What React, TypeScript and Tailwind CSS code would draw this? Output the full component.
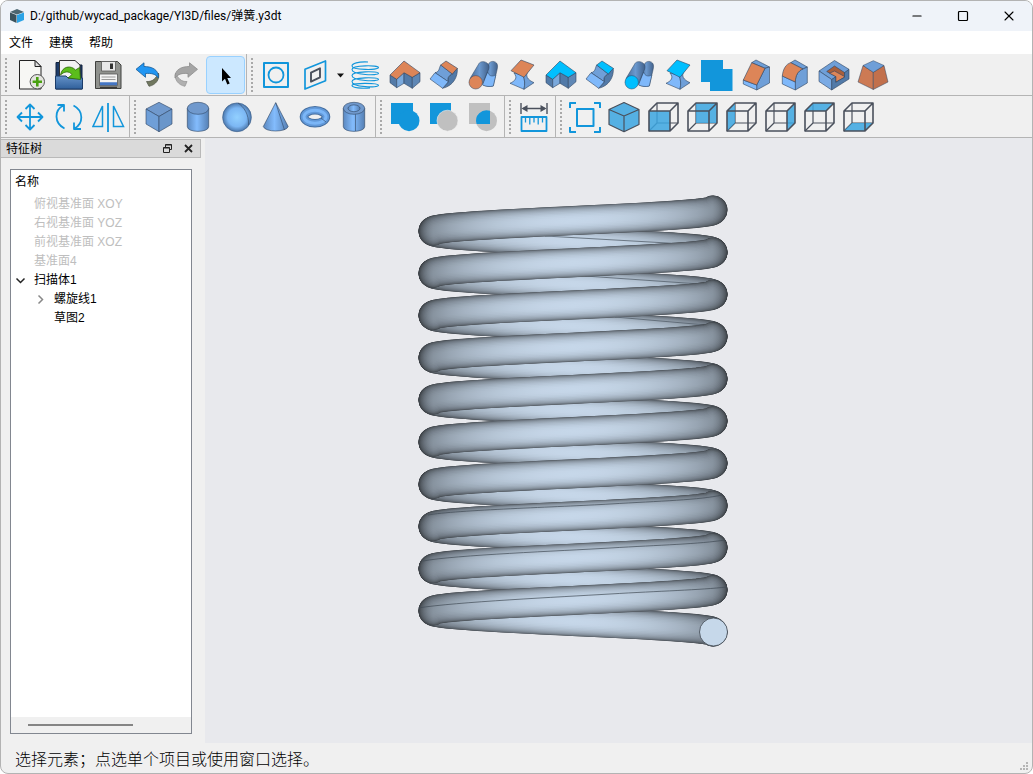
import type { ReactNode } from "react";
import { Minus, Square, X } from "lucide-react";

const BLUE = "#1296db";
const DARK = "#4a505c";
const EDGE = "#2f4461";
const FACE = "#6f9fd8";
const LIGHT = "#7fb8fa";
const SHADE = "#527aa8";
const ORANGE = "#dd8558";
const CYAN = "#00bfff";

function Icon({ children }: { children: ReactNode }) {
  return (
    <svg
      viewBox="0 0 33 32"
      className="h-8 w-[33px]"
      fill="none"
      strokeLinejoin="round"
      aria-hidden="true"
    >
      {children}
    </svg>
  );
}

function Tool({
  label,
  active,
  children,
}: {
  label: string;
  active?: boolean;
  children: ReactNode;
}) {
  return (
    <button
      type="button"
      aria-label={label}
      className={
        active
          ? "flex h-[38px] w-[39px] items-center justify-center rounded-sm border border-[#99d1ff] bg-[#cce8ff]"
          : "flex h-[38px] w-[39px] items-center justify-center rounded-sm hover:bg-[#e0eefa]"
      }
    >
      <Icon>{children}</Icon>
    </button>
  );
}

function ToolGroup({
  label,
  last,
  children,
}: {
  label: string;
  last?: boolean;
  children: ReactNode;
}) {
  return (
    <div
      role="toolbar"
      aria-label={label}
      className={
        last
          ? "flex shrink-0 pt-0.5 pl-1"
          : "flex shrink-0 border-r border-[#b4b4b4] pt-0.5 pr-px pl-1"
      }
    >
      <span className="mt-0.5 mr-[3px] h-[34px] w-[3px] bg-[radial-gradient(circle_at_1px_1px,#a9a9a9_1px,transparent_1px)] bg-[length:3px_4px]" />
      {children}
    </div>
  );
}

/* ---------- modelling icons ---------- */

function SweepIcon({ top }: { top: string }) {
  return (
    <g stroke={EDGE} strokeWidth="0.6">
      <path d="M2 16 8.7 20.3V28.7L2 23.7Z" fill={SHADE} />
      <path d="M8.7 20.3 16 13.7V24.3L8.7 28.7Z" fill="#7aa9dc" />
      <path d="M16 13.7 24.3 18.3V29.3L16 24.3Z" fill={SHADE} />
      <path d="M24.3 18.3 32 13.7V22.7L24.3 29.3Z" fill="#5f87b5" />
      <path d="M2 16 16 2 32 13.7 24.3 18.3 16 13.7 8.7 20.3Z" fill={top} />
    </g>
  );
}

function RevolveIcon({ top }: { top: string }) {
  return (
    <g stroke={EDGE} strokeWidth="0.6">
      <path d="M30.3 9.3C31 18 26 27 15.7 29.3L21.3 22.7C20 20 22 16 25.3 15Z" fill={SHADE} />
      <path d="M13.7 6C12 9 12.5 13 8 13.7L21.3 22.7C20 19 22 16 25.3 15Z" fill={FACE} />
      <path d="M8 13.7 3 20 15.7 29.3 21.3 22.7Z" fill={LIGHT} />
      <path d="M13.7 6 19 2 30.3 9.3 25.3 15Z" fill={top} />
    </g>
  );
}

function SweptPipeIcon({ top }: { top: string }) {
  return (
    <g stroke={EDGE} strokeWidth="0.5">
      <path d="M20 12 22.5 5C24 2 28 1.5 30.5 4 32 6 31.7 8 31 11L27.3 27C24 28 20 27.5 17 26Z" fill="url(#steel)" />
      <path d="M21.5 13C23 17 26 18 29.8 16L27.3 27C24 28 20 27.5 16.5 26Z" fill={LIGHT} />
      <path d="M4 19.5 13 4.5C14.5 2 19 2 21.5 4.5 23.3 6.5 23.3 8.5 22.3 11L16.2 25Z" fill="url(#steel)" />
      <circle cx="9.7" cy="23.3" r="6.7" fill={top} />
    </g>
  );
}

function LoftIcon({ top }: { top: string }) {
  return (
    <g stroke={EDGE} strokeWidth="0.6">
      <path d="M9 14C13 19 10 22 5 24.3L19 30.3C20 25 20 21 18 16Z" fill={LIGHT} />
      <path d="M18 16 24 11C19 17 23 21 29 23.7L19 30.3C20 25 20 21 18 16Z" fill={FACE} />
      <path d="M16 1 29 6 19 18.3 6 11.7Z" fill={top} />
    </g>
  );
}

type Side = "front" | "back" | "left" | "right" | "top" | "bottom";

const SIDES: Record<Side, string> = {
  front: "M2 10H23V30H2Z",
  back: "M10 2H31V22H10Z",
  left: "M2 10 10 2V22L2 30Z",
  right: "M23 10 31 2V22L23 30Z",
  top: "M2 10 10 2H31L23 10Z",
  bottom: "M2 30 10 22H31L23 30Z",
};

function ViewCube({ side }: { side: Side }) {
  return (
    <>
      <path d="M10 2V22H31M10 22 2 30" stroke={DARK} strokeWidth="1.2" />
      <path d={SIDES[side]} fill="#3ba6e0" fillOpacity="0.85" />
      <path
        d="M2 10 10 2H31V22L23 30H2ZM2 10H23V30M23 10 31 2"
        stroke={DARK}
        strokeWidth="1.6"
      />
    </>
  );
}

/* ---------- coil spring ---------- */

const PITCH = 42.2;
const TURNS = 10;
const CX = 573;
const RADIUS = 140;
const BASE_Y = 632;
const TUBE = 29;
const LAYERS = 14;

function halfTurn(front: boolean) {
  const points: string[] = [];
  for (let i = 0; i <= 40; i++) {
    const a = (i / 40) * Math.PI;
    const x = front ? CX - RADIUS * Math.cos(a) : CX + RADIUS * Math.cos(a);
    const y = BASE_Y - (front ? PITCH / 2 : 0) - (PITCH * a) / (2 * Math.PI);
    points.push(`${x.toFixed(1)} ${y.toFixed(1)}`);
  }
  return `M${points.join("L")}`;
}

const layers = Array.from({ length: LAYERS }, (_, i) => {
  const t = i / (LAYERS - 1);
  return {
    id: `tube-${i}`,
    width: TUBE * Math.cos((t * Math.PI) / 2.15),
    light: 0.3 + 0.7 * Math.sin((t * Math.PI) / 2),
  };
});

const stops = Array.from({ length: 21 }, (_, i) => {
  const u = (i / 20) * 2 - 1;
  return { offset: i / 20, shade: 0.46 + 0.54 * Math.pow(1 - u * u, 0.65) };
});

function tone(v: number) {
  const k = 0.12 + 0.88 * v;
  return `rgb(${Math.round(198 * k)} ${Math.round(215 * k)} ${Math.round(233 * k)})`;
}

const turns = Array.from({ length: TURNS }, (_, i) => -i * PITCH);

function Spring() {
  return (
    <svg viewBox="205 138 827 605" className="h-full w-full" role="img" aria-label="弹簧">
      <defs>
        {layers.map((l) => (
          <linearGradient
            key={l.id}
            id={l.id}
            gradientUnits="userSpaceOnUse"
            x1="418"
            x2="728"
            y1="0"
            y2="0"
          >
            {stops.map((s) => (
              <stop key={s.offset} offset={s.offset} stopColor={tone(l.light * s.shade)} />
            ))}
          </linearGradient>
        ))}
        {[true, false].map((front) => (
          <g
            key={String(front)}
            id={front ? "coil-front" : "coil-back"}
            fill="none"
            strokeLinecap="round"
            strokeLinejoin="round"
          >
            {layers.map((l) => (
              <path
                key={l.id}
                d={halfTurn(front)}
                stroke={`url(#${l.id})`}
                strokeWidth={l.width}
              />
            ))}
          </g>
        ))}
      </defs>
      {turns.map((dy) => (
        <use key={dy} href="#coil-back" y={dy} />
      ))}
      <g stroke="#56616c" strokeWidth="0.8">
        <path d="M545 236 685 244M585 276 700 284M615 317 706 325" />
      </g>
      {turns.map((dy) => (
        <use key={dy} href="#coil-front" y={dy} />
      ))}
      <g stroke="#414b55" strokeWidth="0.7" fill="none">
        <path d="M418 608C455 602 560 597 610 594S700 590 727 587" />
        <path d="M423 561C455 555 560 551 610 548S700 544 725 540" />
        <path d="M428 515C455 510 560 507 610 504S700 500 722 495" />
      </g>
      <circle cx="713.5" cy="632" r="14" fill="#c6d8ea" stroke="#3c444c" strokeWidth="0.8" />
    </svg>
  );
}

/* ---------- feature tree ---------- */

const planes = ["俯视基准面 XOY", "右视基准面 YOZ", "前视基准面 XOZ", "基准面4"];

function FeatureTree() {
  return (
    <div className="flex flex-1 flex-col border border-[#828790] bg-white font-['Liberation_Sans','Noto_Sans_CJK_SC',sans-serif]">
      <div className="pt-[3px] pl-1 leading-[19px]">名称</div>
      <ul role="tree" aria-label="特征树" className="flex-1 pt-[3px] leading-[19px]">
        {planes.map((name) => (
          <li key={name} role="treeitem" className="pl-[23px] text-[#bebebe]">
            {name}
          </li>
        ))}
        <li role="treeitem" aria-expanded="true">
          <div className="flex">
            <button type="button" aria-label="折叠" className="flex w-[23px] items-center pl-1">
              <svg viewBox="0 0 11 11" className="size-[11px]" fill="none" aria-hidden="true">
                <path d="M1.5 3.5 5.5 7.5 9.5 3.5" stroke="#222" strokeWidth="1.5" />
              </svg>
            </button>
            扫描体1
          </div>
          <ul role="group">
            <li role="treeitem" aria-expanded="false" className="flex pl-5">
              <button type="button" aria-label="展开" className="flex w-[23px] items-center pl-1">
                <svg viewBox="0 0 11 11" className="size-[11px]" fill="none" aria-hidden="true">
                  <path d="M3.5 1.5 7.5 5.5 3.5 9.5" stroke="#888" strokeWidth="1.5" />
                </svg>
              </button>
              螺旋线1
            </li>
            <li role="treeitem" className="pl-[43px]">
              草图2
            </li>
          </ul>
        </li>
      </ul>
      <div className="h-4 bg-[#f0f0f0] pt-[7px] pl-[17px]">
        <div className="h-0.5 w-[105px] bg-[#858585]" />
      </div>
    </div>
  );
}

export default function App() {
  return (
    <div className="flex h-screen min-h-[600px] flex-col overflow-hidden rounded-lg border border-[#b3b3b3] bg-[#f0f0f0] font-['Open_Sans','Noto_Sans_CJK_SC',sans-serif] text-xs text-black">
      <svg className="absolute size-0" aria-hidden="true">
        <defs>
          <linearGradient id="steel">
            <stop offset="0" stopColor="#4a6c98" />
            <stop offset="0.5" stopColor="#6b99cf" />
            <stop offset="1" stopColor="#42618a" />
          </linearGradient>
          <linearGradient id="round">
            <stop offset="0" stopColor="#5b88bf" />
            <stop offset="0.45" stopColor="#83bcfd" />
            <stop offset="1" stopColor="#557fb3" />
          </linearGradient>
          <radialGradient id="ball">
            <stop offset="0" stopColor="#92d0ff" />
            <stop offset="0.65" stopColor="#7cb7f4" />
            <stop offset="1" stopColor="#4b76aa" />
          </radialGradient>
          <linearGradient id="folder" x2="0" y2="1">
            <stop offset="0" stopColor="#6592c8" />
            <stop offset="1" stopColor="#30609b" />
          </linearGradient>
        </defs>
      </svg>

      <header className="flex h-[30px] shrink-0 items-center bg-[#eff3f9]">
        <svg viewBox="0 0 16 16" className="mr-[5px] ml-2 size-4" aria-hidden="true">
          <path d="M1 4 8 1 15 4 8 6.5Z" fill="#4c6670" />
          <path d="M1 4.5 7.5 7V15L1 12Z" fill="#3b525c" />
          <path d="M8 7 15 4.5V12L8 15Z" fill="#2ba3e6" />
        </svg>
        <h1 className="font-[Roboto,'Noto_Sans_CJK_SC',sans-serif]">
          D:/github/wycad_package/YI3D/files/弹簧.y3dt
        </h1>
        <div className="ml-auto flex h-full">
          <button type="button" aria-label="最小化" className="flex w-[46px] items-center justify-center">
            <Minus className="size-3.5" strokeWidth={2} />
          </button>
          <button type="button" aria-label="最大化" className="flex w-[46px] items-center justify-center">
            <Square className="size-3" strokeWidth={2.4} />
          </button>
          <button type="button" aria-label="关闭" className="flex w-[46px] items-center justify-center">
            <X className="size-4" strokeWidth={1.6} />
          </button>
        </div>
      </header>

      <nav aria-label="菜单" className="flex h-[23px] shrink-0 items-center bg-white">
        {["文件", "建模", "帮助"].map((name) => (
          <button key={name} type="button" className="w-10">
            {name}
          </button>
        ))}
      </nav>

      <div className="flex h-[42px] shrink-0 border-b border-[#b4b4b4]">
        <ToolGroup label="文件">
          <Tool label="新建">
            <path d="M5.5 1.5H21L27 7.5V30H5.5Z" fill="#f7f7f4" stroke="#222" />
            <path d="M21 1.5V7.5H27Z" fill="#ddd" stroke="#222" />
            <circle cx="23.3" cy="22.7" r="7.2" fill="#e4e4df" stroke="#555" />
            <path d="M23.3 18V27.4M18.6 22.7H28" stroke="#49a010" strokeWidth="2.6" />
          </Tool>
          <Tool label="打开">
            <path d="M3 30V3.5H9L11 6H29V30Z" fill="#1d3b68" stroke="#12233e" />
            <path d="M6.5 1.5H22L27 6V20H6.5Z" fill="#f2f2f2" stroke="#333" />
            <path d="M2.5 17H13L15 19H29.5V30H2.5Z" fill="url(#folder)" stroke="#1c3c69" />
            <path
              d="M7.5 16C9 7 18 6 22.5 11L26.5 8.5 27.5 20.5 15 19 19 15.5C16 11.5 11 12.5 7.5 16Z"
              fill="#5bbd1b"
              stroke="#2c6408"
              strokeWidth="0.8"
            />
          </Tool>
          <Tool label="保存">
            <path d="M3.5 2.5H25.5L29 6V29.5H3.5Z" fill="#8f918d" stroke="#3f403e" />
            <rect x="9.5" y="2.5" width="14" height="9.5" fill="#e9e9e9" stroke="#555" strokeWidth="0.8" />
            <rect x="18" y="4.5" width="3" height="5.5" fill="#333" />
            <rect x="7.5" y="15" width="18" height="11.5" fill="#f4f4f4" stroke="#555" strokeWidth="0.8" />
            <path d="M9.5 18H23.5M9.5 20.5H23.5" stroke="#999" />
            <path d="M8 24.8H25" stroke="#4476c4" strokeWidth="3" />
            <path d="M8 28.3H25" stroke="#222" />
          </Tool>
          <Tool label="撤销">
            <path d="M27.5 14C29 20 25 26 18 27.3L15.5 22.5C22 23 25 19 27.5 14Z" fill="#71785f" stroke="#4d5345" strokeWidth="0.7" />
            <path d="M5 10.3 13 3.8V7.5C20 7.5 28 10 27.5 19 25 15 20 14 14.5 14.5V18.3Z" fill="#2196f3" stroke="#175b96" strokeWidth="0.8" />
          </Tool>
          <Tool label="重做">
            <path d="M5.5 14C4 20 8 26 15 27.3L17 22.5C11 23 8 19 5.5 14Z" fill="#b0b0b0" stroke="#929292" strokeWidth="0.7" />
            <path d="M27.5 10.3 19.5 3.8V7.5C12 7.5 4.5 10 5 19 8 15 12 14 18 14.5V18.3Z" fill="#a5a5a5" stroke="#8d8d8d" strokeWidth="0.8" />
          </Tool>
          <Tool label="选择" active>
            <path d="M13 9V22.5L16 19.7 18.3 25.5 20.7 24.5 18.3 19H22Z" fill="#000" />
          </Tool>
        </ToolGroup>

        <ToolGroup label="建模" last>
          <Tool label="草图">
            <rect x="4" y="4" width="24" height="24" stroke={BLUE} strokeWidth="2" />
            <circle cx="16" cy="16" r="7.5" stroke={BLUE} strokeWidth="1.8" />
          </Tool>
          <Tool label="基准面">
            <path d="M6 10.3 26.5 2V21.7L6 30Z" stroke={BLUE} strokeWidth="1.7" />
            <path d="M12 13.7 21 9.3V18.3L12 22.7Z" stroke={DARK} strokeWidth="1.9" />
          </Tool>
          <button type="button" aria-label="更多基准面" className="flex w-[11px] items-center justify-center">
            <svg viewBox="0 0 9 5" className="h-[5px] w-[9px]" aria-hidden="true">
              <path d="M1 0.5H8L4.5 4.5Z" fill="#111" />
            </svg>
          </button>
          <Tool label="螺旋线">
            <path
              d="M19 3C9 2.5 3 4.5 3 7 3 11 29.5 11.5 29.5 8.5 29.5 6 3 6 3 10.5 3 16 29.5 17 29.5 14.3 29.5 12 3 12 3 16.5 3 22 29.5 23 29.5 20.3 29.5 18 3 18 3 22.5 3 28.5 29.5 29 29.5 26.3 29.5 24 3 23.5 3 26.5 3 29 13 29.5 21 29"
              stroke={BLUE}
              strokeWidth="1.1"
            />
          </Tool>
          <Tool label="拉伸"><SweepIcon top={ORANGE} /></Tool>
          <Tool label="旋转"><RevolveIcon top={ORANGE} /></Tool>
          <Tool label="扫描"><SweptPipeIcon top={ORANGE} /></Tool>
          <Tool label="放样"><LoftIcon top={ORANGE} /></Tool>
          <Tool label="拉伸曲面"><SweepIcon top={CYAN} /></Tool>
          <Tool label="旋转曲面"><RevolveIcon top={CYAN} /></Tool>
          <Tool label="扫描曲面"><SweptPipeIcon top={CYAN} /></Tool>
          <Tool label="放样曲面"><LoftIcon top={CYAN} /></Tool>
          <Tool label="合并">
            <path d="M1 1H23V10H32.5V32H10V23H1Z" fill={BLUE} />
          </Tool>
          <Tool label="倒角">
            <g stroke={EDGE} strokeWidth="0.6">
              <path d="M12.7 3.7 17 1 30.5 8 26 9.3Z" fill={FACE} />
              <path d="M26 9.3 30.5 8V24L17.7 31V26Z" fill={FACE} />
              <path d="M4.3 21 17.7 26V31L4.3 25Z" fill={LIGHT} />
              <path d="M12.7 3.7 26 9.3 17.7 26 4.3 21Z" fill={ORANGE} />
            </g>
          </Tool>
          <Tool label="圆角">
            <g stroke={EDGE} strokeWidth="0.6">
              <path d="M12.7 3.7 17 1 29.3 8 25 10Z" fill={FACE} />
              <path d="M25 10 29.3 8V24L17.3 31V23C17.3 17 20 11.5 25 10Z" fill={FACE} />
              <path d="M4.3 17 17.3 23V31L4.3 25Z" fill={LIGHT} />
              <path d="M12.7 3.7 25 10C20 11.5 17.3 17 17.3 23L4.3 17C5 10 8 5 12.7 3.7Z" fill={ORANGE} />
            </g>
          </Tool>
          <Tool label="抽壳">
            <g stroke={EDGE} strokeWidth="0.6">
              <path d="M2 12 17.5 1.5 32 10.3 27.5 14 14.7 20.5Z" fill={FACE} />
              <path d="M9.7 12.5 17.5 7 27.5 13.5V18.3L18.7 23.3V17.5Z" fill="#a85f3c" />
              <path d="M17.5 12 27.5 17.5V18.3L18.7 23.3V17.5L12.5 14.2Z" fill={ORANGE} />
              <path d="M2 12 14.7 20.5V31L2 22.5Z" fill="#7aaae4" />
              <path d="M14.7 20.5 18.7 17.7V23.3L27.5 18.3V13.7L32 10.3V20L14.7 31Z" fill={SHADE} />
            </g>
          </Tool>
          <Tool label="拔模">
            <g stroke={EDGE} strokeWidth="0.5">
              <path d="M7 6.5 17.3 13.3V30.5L2 23Z" fill="#cd7a54" />
              <path d="M28 6.5 17.3 13.3V30.5L32 23Z" fill="#c2704c" />
              <path d="M7 6.5 17.3 1.7 28 6.5 17.3 13.3Z" fill={FACE} />
            </g>
          </Tool>
        </ToolGroup>
      </div>

      <div className="flex h-[42px] shrink-0 border-b border-[#b4b4b4]">
        <ToolGroup label="变换">
          <Tool label="移动">
            <path
              d="M16 3.5V28.5M3.5 16H28.5M11.5 8 16 3.5 20.5 8M11.5 24 16 28.5 20.5 24M8 11.5 3.5 16 8 20.5M24 11.5 28.5 16 24 20.5"
              stroke={BLUE}
              strokeWidth="1.8"
            />
          </Tool>
          <Tool label="转动">
            <path
              d="M11.5 27.5C1 22 1 9 10.5 4.5M4.5 4H11V10.5M20.5 4.5C31 10 30.5 22.5 21.5 27.5M28 28H21V21.5"
              stroke={BLUE}
              strokeWidth="1.8"
            />
          </Tool>
          <Tool label="镜像">
            <path d="M10.5 5V25.5H1ZM21.5 5V25.5H31.5Z" stroke={BLUE} strokeWidth="1.5" strokeLinejoin="miter" />
            <path d="M16 2V31" stroke={BLUE} strokeWidth="1.8" />
          </Tool>
        </ToolGroup>

        <ToolGroup label="基本体">
          <Tool label="立方体">
            <g stroke={EDGE} strokeWidth="0.6">
              <path d="M3 8 16 1.3 29 8 16 15.5Z" fill="#7099cd" />
              <path d="M3 8 16 15.5V30.7L3 23Z" fill={FACE} />
              <path d="M29 8 16 15.5V30.7L29 23Z" fill="#6a96ca" />
            </g>
          </Tool>
          <Tool label="圆柱">
            <g stroke={EDGE} strokeWidth="0.6">
              <path d="M5.3 7.3V25.5C5.3 32 26.7 32 26.7 25.5V7.3Z" fill="url(#round)" />
              <ellipse cx="16" cy="7.3" rx="10.7" ry="6" fill="#7099cd" />
            </g>
          </Tool>
          <Tool label="球">
            <circle cx="16" cy="16.3" r="14.4" fill="url(#ball)" stroke="#3d6089" strokeWidth="0.6" />
            <path d="M17 2C23 6 28 13 27.5 24" stroke={EDGE} strokeWidth="0.6" />
          </Tool>
          <Tool label="圆锥">
            <path d="M15.7 1.7 3.3 25.5C5 31.5 26.5 31.5 28.2 25.5Z" fill="url(#round)" stroke={EDGE} strokeWidth="0.6" />
            <path d="M15.7 1.7 24.5 29" stroke={EDGE} strokeWidth="0.6" />
          </Tool>
          <Tool label="圆环">
            <ellipse cx="16" cy="15.8" rx="11" ry="6.5" stroke="#456e9f" strokeWidth="8.6" />
            <ellipse cx="16" cy="15.8" rx="11" ry="6.5" stroke="#6198d8" strokeWidth="6.5" />
            <ellipse cx="16" cy="15.8" rx="11" ry="6.5" stroke="#7bb6f7" strokeWidth="3" />
            <path d="M22 17 27 21" stroke={EDGE} strokeWidth="0.6" />
          </Tool>
          <Tool label="圆管">
            <g stroke={EDGE} strokeWidth="0.6">
              <path d="M5.3 7.3V25.5C5.3 32 26.7 32 26.7 25.5V7.3Z" fill="url(#round)" />
              <ellipse cx="16" cy="7.3" rx="10.7" ry="6" fill="#7099cd" />
              <ellipse cx="16" cy="7.3" rx="6" ry="3.4" fill="url(#round)" />
              <path d="M17.5 13.3V30" />
            </g>
          </Tool>
        </ToolGroup>

        <ToolGroup label="布尔运算">
          <Tool label="并集">
            <rect x="2" y="2" width="22" height="21" fill={BLUE} />
            <circle cx="20" cy="19.7" r="10.5" fill={BLUE} />
          </Tool>
          <Tool label="差集">
            <rect x="2" y="2" width="21" height="21" fill={BLUE} />
            <circle cx="19.5" cy="19.7" r="10.5" fill="#c0c0c0" stroke="#f0f0f0" strokeWidth="0.6" />
          </Tool>
          <Tool label="交集">
            <rect x="2" y="2" width="21" height="21" fill="#c0c0c0" />
            <circle cx="19.5" cy="19.7" r="10.5" fill="#c0c0c0" />
            <path d="M23 9.8V23H9.6A10.5 10.5 0 0 1 23 9.8Z" fill={BLUE} />
          </Tool>
        </ToolGroup>

        <ToolGroup label="测量">
          <Tool label="测量">
            <path d="M3 2V13M29 2V13M5 7.5H27" stroke={DARK} strokeWidth="1.4" />
            <path d="M3.5 7.5 9.5 4V11ZM28.5 7.5 22.5 4V11Z" fill={DARK} />
            <rect x="3.5" y="16" width="25" height="14" stroke={BLUE} strokeWidth="1.8" />
            <path d="M7.5 17V21.5M11.8 17V23.5M16 17V21.5M20.2 17V23.5M24.5 17V21.5" stroke={BLUE} strokeWidth="1.3" />
          </Tool>
        </ToolGroup>

        <ToolGroup label="视图" last>
          <Tool label="适合窗口">
            <rect x="8" y="8" width="16.5" height="17" stroke={BLUE} strokeWidth="2" />
            <path d="M1 7V2H7M25 2H31V7M31 26V31H25M7 31H1V26" stroke={BLUE} strokeWidth="2" />
          </Tool>
          <Tool label="等轴测">
            <path d="M1 8.5 16 1.5 31 8.5V23.5L16 30.7 1 23.5Z" fill="#55b0e3" />
            <path
              d="M1 8.5 16 1.5 31 8.5V23.5L16 30.7 1 23.5ZM1 8.5 16 15 31 8.5M16 15V30.7"
              stroke={DARK}
              strokeWidth="1.2"
            />
          </Tool>
          <Tool label="前视"><ViewCube side="front" /></Tool>
          <Tool label="后视"><ViewCube side="back" /></Tool>
          <Tool label="左视"><ViewCube side="left" /></Tool>
          <Tool label="右视"><ViewCube side="right" /></Tool>
          <Tool label="俯视"><ViewCube side="top" /></Tool>
          <Tool label="仰视"><ViewCube side="bottom" /></Tool>
        </ToolGroup>
      </div>

      <main className="flex min-h-0 flex-1">
        <aside className="flex w-[204px] shrink-0 flex-col pt-px pb-[9px]">
          <div className="mr-1 flex h-[19px] shrink-0 items-center border border-l-0 border-[#b9b9b9] bg-[#dadada] pl-[5px]">
            <h2 className="flex-1 leading-4">特征树</h2>
            <button type="button" aria-label="浮动" className="mr-3 flex">
              <svg viewBox="0 0 9 9" className="size-[9px]" fill="none" stroke="#222" aria-hidden="true">
                <path d="M2.5 3V0.5H8.5V5.5H6.5M2.5 1H8.5M0.5 3.5H6.5V8.5H0.5ZM0.5 4H6.5" />
              </svg>
            </button>
            <button type="button" aria-label="关闭面板" className="mr-[7px] flex">
              <svg viewBox="0 0 9 9" className="size-[9px]" aria-hidden="true">
                <path d="M1 1 8 8M8 1 1 8" stroke="#222" strokeWidth="1.8" />
              </svg>
            </button>
          </div>
          <div className="mt-[11px] mr-[13px] ml-[9px] flex flex-1">
            <FeatureTree />
          </div>
        </aside>
        <section aria-label="三维视图" className="min-w-0 flex-1 bg-[#e8e9ed]">
          <Spring />
        </section>
      </main>

      <footer className="flex h-[30px] shrink-0 items-center justify-between pl-3.5 font-['Noto_Sans_CJK_SC',sans-serif] text-base font-light">
        <p>选择元素；点选单个项目或使用窗口选择。</p>
        <svg viewBox="0 0 9 9" className="mr-[3px] mb-0.5 size-[9px] self-end" fill="#b5b5b5" aria-hidden="true">
          <path d="M6 0H8V2H6ZM3 3H5V5H3ZM6 3H8V5H6ZM0 6H2V8H0ZM3 6H5V8H3ZM6 6H8V8H6Z" />
        </svg>
      </footer>
    </div>
  );
}
